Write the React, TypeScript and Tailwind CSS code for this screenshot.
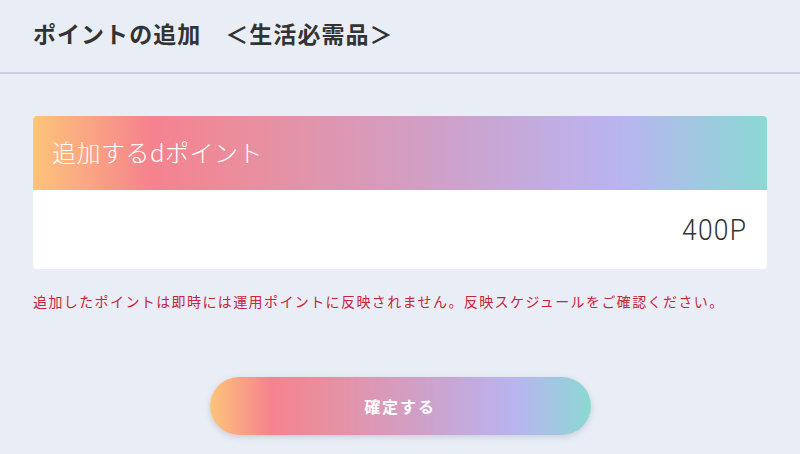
import React from "react";

const gradient =
  "bg-[linear-gradient(90deg,#fdc47a_0%,#f6828e_16%,#e98f9f_30%,#cfa0c8_55%,#b9b4f0_80%,#8bd9d3_100%)]";

const App = () => {
  return (
    <div
      className="w-[800px] h-[454px] bg-[#e9eef6] overflow-hidden"
      style={{ fontFamily: '"Noto Sans CJK JP", "Noto Sans", sans-serif' }}
    >
      <header className="h-[74px] flex items-center px-[33px] border-b-2 border-[#c9cfdc]">
        <h1 className="text-[23px] font-bold text-[#333] tracking-[0.045em] pb-[6px]">
          ポイントの追加　＜生活必需品＞
        </h1>
      </header>

      <main className="px-[33px] pt-[42px]">
        <div className="rounded-[4px] overflow-hidden bg-white">
          <div className={`${gradient} h-[74px] flex items-center px-[19px]`}>
            <span className="text-white text-[24px] font-light tracking-[0.02em] pb-[2px]">
              追加するdポイント
            </span>
          </div>
          <div className="h-[79px] flex items-center justify-end px-[20px]">
            <span
              className="text-[30px] font-light text-[#333] tracking-[0.05em] inline-block scale-x-[0.88] origin-right"
              style={{ fontFamily: "Roboto, sans-serif" }}
            >
              400P
            </span>
          </div>
        </div>

        <p className="mt-[22px] text-[14px] tracking-[0.1em] text-[#c8243c]">
          追加したポイントは即時には運用ポイントに反映されません。反映スケジュールをご確認ください。
        </p>

        <div className="flex justify-center mt-[65px]">
          <button
            className={`${gradient} w-[381px] h-[58px] rounded-full text-white font-bold text-[16px] tracking-[0.12em] shadow-[0_2px_6px_rgba(120,130,160,0.3)]`}
          >
            確定する
          </button>
        </div>
      </main>
    </div>
  );
};

export default App;
